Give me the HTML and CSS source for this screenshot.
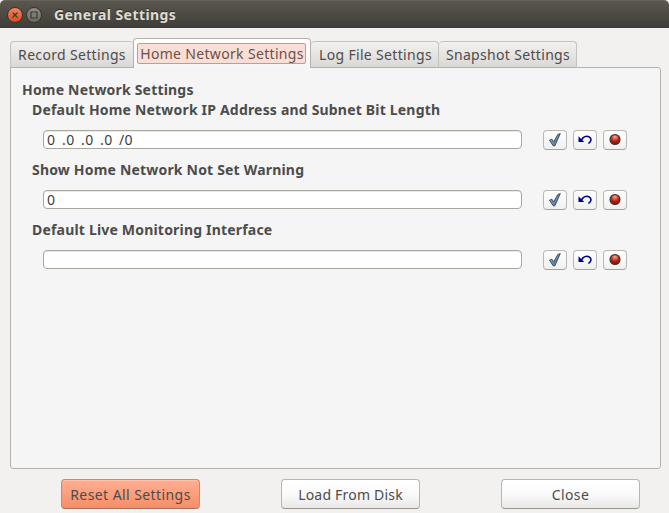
FILE: index.html
```
<!DOCTYPE html>
<html lang="en"><head><meta charset="utf-8"><title>General Settings</title><link rel="stylesheet" href="styles.css"></head>
<body>
<svg class="sprites" aria-hidden="true">
  <defs>
    <linearGradient id="steel" x1="0" y1="0" x2="1" y2="1"><stop offset="0" stop-color="#8db8df"/><stop offset=".6" stop-color="#5f8bb7"/><stop offset="1" stop-color="#35516e"/></linearGradient>
    <radialGradient id="ruby" cx=".5" cy=".2" r=".8"><stop offset="0" stop-color="#f0aaa0"/><stop offset=".45" stop-color="#d2402d"/><stop offset=".62" stop-color="#b01c0e"/><stop offset="1" stop-color="#8c1207"/></radialGradient>
  </defs>
  <symbol id="check" viewBox="0 0 14 14"><path d="M1.500 7.200 3.900 6.200l1.700 2.800L9.800 1.500l2.500-.9L6.800 12.800H5.200Z" fill="url(#steel)" stroke="#34404c" stroke-width=".9" stroke-linejoin="round"/></symbol>
  <symbol id="undo" viewBox="0 0 14 14"><path d="M3.500 6.800C5.200 3.800 8.300 2.600 10.900 3.700c3 1.500 2.700 5.200-.5 6.800" fill="none" stroke="#00008b" stroke-width="1.600"/><path d="M.5 3.300V9.100h5.800Z" fill="#00008b"/></symbol>
  <symbol id="record" viewBox="0 0 14 14"><circle cx="7" cy="6.500" r="4.900" fill="url(#ruby)" stroke="#45302d" stroke-width="1.300"/></symbol>
</svg>
<header class="titlebar">
  <span class="wm close"><svg viewBox="0 0 14 14"><path d="m4.500 4.500 5 5m0-5-5 5"/></svg></span>
  <span class="wm maximize"><svg viewBox="0 0 14 14"><path d="M4 4h6v6H4Z"/></svg></span>
  <h1>General Settings</h1>
</header>
<main>
  <nav class="tabs">
    <div class="tab record">Record Settings</div>
    <div class="tab home selected"><div class="focus">Home Network Settings</div></div>
    <div class="tab log">Log File Settings</div>
    <div class="tab snapshot">Snapshot Settings</div>
  </nav>
  <section class="panel">
    <h2>Home Network Settings</h2>
    <div class="setting"><h3>Default Home Network IP Address and Subnet Bit Length</h3>
      <div class="row"><div class="field ip"><span>0</span><span>.0</span><span>.0</span><span>.0</span><span>/0</span></div><button><svg><use href="#check"/></svg></button><button><svg><use href="#undo"/></svg></button><button><svg><use href="#record"/></svg></button></div></div>
    <div class="setting"><h3>Show Home Network Not Set Warning</h3>
      <div class="row"><div class="field">0</div><button><svg><use href="#check"/></svg></button><button><svg><use href="#undo"/></svg></button><button><svg><use href="#record"/></svg></button></div></div>
    <div class="setting"><h3>Default Live Monitoring Interface</h3>
      <div class="row"><div class="field"></div><button><svg><use href="#check"/></svg></button><button><svg><use href="#undo"/></svg></button><button><svg><use href="#record"/></svg></button></div></div>
  </section>
  <footer><button class="action reset">Reset All Settings</button><button class="action load">Load From Disk</button><button class="action dismiss">Close</button></footer>
</main>
</body></html>
```
FILE: styles.css
```
* { box-sizing: border-box; }
body { margin: 0; width: 669px; height: 513px; overflow: hidden; display: flex; flex-direction: column; background: #f2f1f0; color: #4c4c4c; font: 14px/20px "Noto Sans", sans-serif; }
h1, h2, h3 { margin: 0; font-size: 14px; line-height: 20px; font-weight: 700; white-space: nowrap; letter-spacing: .19px; }
.sprites { position: absolute; width: 0; height: 0; }
.titlebar { height: 28px; flex: none; display: flex; align-items: center; padding-left: 7px; background: linear-gradient(#5a574f, #3e3d38); border-top: 1px solid #65625a; border-radius: 5px 5px 0 0; color: #dfdbd2; }
.titlebar h1 { margin-left: 12px; letter-spacing: .42px; text-shadow: 0 -1px #302f2b; }
.wm { width: 16px; height: 16px; border-radius: 50%; border: 1px solid #373530; margin-right: 3px; }
.wm svg { display: block; width: 14px; height: 14px; fill: none; stroke: #3e3a34; stroke-width: 1.200; }
.close { background: linear-gradient(#f38563, #df4a16); }
.maximize { background: linear-gradient(#918e83, #6b6961); margin-right: 0; }
main { flex: 1; padding: 10px 8px 0 10px; display: flex; flex-direction: column; }
.tabs { height: 30px; display: flex; align-items: flex-end; position: relative; z-index: 1; margin-bottom: -1px; flex: none; letter-spacing: .33px; }
.tab { height: 27px; border: 1px solid #c5c2be; border-bottom-color: #b5b2ae; border-left-width: 0; border-radius: 4px 4px 0 0; background: linear-gradient(#f2f1f0, #dad8d5); white-space: nowrap; display: flex; justify-content: center; align-items: center; }
.record { width: 123px; border-left-width: 1px; border-right: 0; }
.home { width: 178px; }
.log { width: 128px; padding-left: 2px; }
.snapshot { width: 138px; padding-left: 1px; }
.selected { height: 30px; background: linear-gradient(#fff, #f5f5f5); border: 1px solid #b5b2ae; border-bottom: 0; padding: 4px 0 0 3px; justify-content: flex-start; align-items: flex-start; }
.focus { width: 169px; height: 21px; border: 1px solid #ed8d69; border-radius: 2px; background: #f8ded5; color: #6c5149; display: flex; justify-content: center; align-items: center; padding-left: 1px; }
.panel { height: 402px; flex: none; width: 651px; border: 1px solid #b5b2ae; border-radius: 0 3px 3px 3px; background: #f5f5f5; padding: 12px 11px; }
.setting { height: 60px; padding-left: 10px; }
.row { display: flex; align-items: flex-start; padding: 10px 0 0 11px; gap: 6px; }
.setting h3 { height: 20px; }
.field { width: 479px; height: 19px; border: 1px solid #aaa6a0; border-radius: 4px; background: #fff; box-shadow: inset 0 1px #eceae8; padding-left: 3px; line-height: 17px; color: #3c3c3c; margin-right: 15px; }
.row button { width: 24px; height: 20px; padding: 0; border: 1px solid #bbb8b4; border-bottom-color: #a5a29e; border-radius: 4px; background: linear-gradient(#fff, #f0f0ef); display: flex; justify-content: center; align-items: center; }
.row svg { width: 14px; height: 14px; }
.ip { display: grid; grid-template-columns: 15px 19px 19px 19px 19px; letter-spacing: .4px; }
footer { display: flex; gap: 81px; padding: 10px 0 0 51px; }
.action { width: 139px; height: 30px; padding: 2px 0 0; border: 1px solid #b9b6b2; border-bottom-color: #96938f; border-radius: 4px; background: linear-gradient(#fff, #fafafa 50%, #e9e8e7); color: inherit; font: inherit; }
.reset { letter-spacing: .42px; border-color: #c78975; border-bottom-color: #ad6f5a; background: linear-gradient(#ffae91, #fc9e7c 50%, #f48e68); box-shadow: inset 0 1px #ffc1aa; }
.load { letter-spacing: .2px; }
.dismiss { letter-spacing: .4px; }
```
